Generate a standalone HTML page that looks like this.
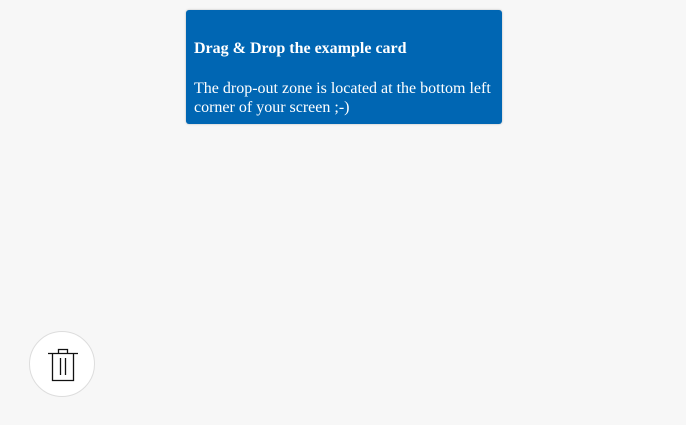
<!DOCTYPE html>
<html><head><style>
body{margin:0;width:686px;height:425px;background:#f7f7f7;position:relative;overflow:hidden;font-family:"Liberation Serif",serif;}
.card{position:absolute;left:186px;top:10px;width:316px;height:114px;background:#0066b3;border-radius:3px;box-shadow:0 0 2px rgba(0,0,0,.25);color:#fff;box-sizing:border-box;padding:0 8px;}
.t{position:absolute;left:8px;top:30px;font-weight:bold;font-size:16px;}
.d{position:absolute;left:8px;top:69px;font-size:16px;line-height:19px;width:305px;}
.c{position:absolute;left:29px;top:331px;width:64px;height:64px;border-radius:50%;background:#fff;border:1px solid #ddd;}
</style></head><body>
<div class="card"><div class="t">Drag &amp; Drop the example card</div>
<div class="d">The drop-out zone is located at the bottom left corner of your screen ;-)</div></div>
<div class="c"><svg width="64" height="64" viewBox="29 331 64 64" style="position:absolute;left:0;top:0">
<g fill="none" stroke="#111" stroke-width="1.3">
<path d="M47 352.5H77"/><path d="M57.5 352.5V348.5H66.5V352.5"/>
<path d="M51.5 352.5V379.5H72.5V352.5"/>
<path d="M59.5 357V374M64.5 357V374"/></g></svg></div>
</body></html>
